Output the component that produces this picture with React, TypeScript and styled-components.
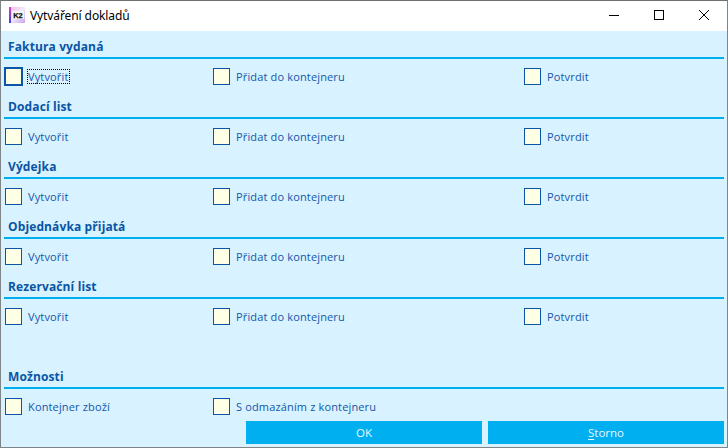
import React from "react";
import styled, { createGlobalStyle } from "styled-components";

const Global = createGlobalStyle`
  html, body { margin: 0; padding: 0; background: #fff; }
`;

const Window = styled.div`
  width: 728px;
  height: 448px;
  box-sizing: border-box;
  border: 1px solid #7f8487;
  border-top-color: #6d7073;
  display: flex;
  flex-direction: column;
  background: #fff;
  overflow: hidden;
`;

const TitleBar = styled.div`
  height: 30px;
  flex: none;
  display: flex;
  align-items: center;
  background: #fff;
`;

const TitleIcon = styled.svg`
  width: 16px;
  height: 16px;
  margin: 0 0 2px 8px;
  flex: none;
`;

const TitleText = styled.span`
  margin-left: 5px;
  padding-bottom: 1px;
  font: 12px "Noto Sans", "Open Sans", sans-serif;
  letter-spacing: -0.1px;
  color: #000;
  flex: 1;
`;

const WinButton = styled.div<{ $gap?: number }>`
  width: 45px;
  height: 30px;
  padding-bottom: 2px;
  box-sizing: border-box;
  display: flex;
  align-items: center;
  justify-content: center;
  margin-right: ${(p) => p.$gap ?? 0}px;
`;

const Body = styled.div`
  flex: 1;
  background: #d8f2ff;
  padding: 0 3px;
  display: flex;
  flex-direction: column;
`;

const Section = styled.section<{ $top?: number }>`
  margin-top: ${(p) => p.$top ?? 0}px;
`;

const Heading = styled.div`
  height: 28px;
  box-sizing: border-box;
  padding: 8px 0 0 4px;
  font: bold 12px/16px "Open Sans", sans-serif;
  letter-spacing: 0.12px;
  color: #0a55a5;
  border-bottom: 2px solid #00aff0;
`;

const Row = styled.div`
  display: grid;
  grid-template-columns: 208px 311px 1fr;
  height: 32px;
  box-sizing: border-box;
  padding-top: 3px;
  align-items: center;
`;

const Field = styled.label`
  display: flex;
  align-items: center;
  padding-left: 1px;
  min-width: 0;
`;

const Box = styled.span<{ $focus?: boolean }>`
  width: ${(p) => (p.$focus ? 19 : 17)}px;
  height: ${(p) => (p.$focus ? 19 : 17)}px;
  margin: 0 ${(p) => (p.$focus ? -1 : 0)}px;
  box-sizing: border-box;
  flex: none;
  background: #ffffe6;
  border: ${(p) => (p.$focus ? 2 : 1)}px solid #0a55a5;
`;

const Label = styled.span<{ $focus?: boolean }>`
  margin-left: 5px;
  padding: 0 1px;
  font: 11px/15px "Open Sans", sans-serif;
  letter-spacing: 0.15px;
  color: #1257ab;
  white-space: nowrap;
  outline: ${(p) => (p.$focus ? "1px dotted #000" : "none")};
  outline-offset: -1px;
`;

const Buttons = styled.div`
  display: flex;
  justify-content: flex-end;
  gap: 6px;
`;

const Btn = styled.div`
  width: 236px;
  height: 23px;
  background: #00aff0;
  color: #e8f8ff;
  font: 11.5px/23px "Open Sans", sans-serif;
  text-align: center;

  u { text-underline-offset: 2px; }
`;

const docs = [
  "Faktura vydaná",
  "Dodací list",
  "Výdejka",
  "Objednávka přijatá",
  "Rezervační list",
];

const Logo = () => (
  <TitleIcon viewBox="0 0 16 16">
    <defs>
      <linearGradient id="lg" x1="0" y1="0" x2="1" y2="1">
        <stop offset="0" stopColor="#f4b6e6" />
        <stop offset="0.5" stopColor="#f3eaf8" />
        <stop offset="1" stopColor="#c7a4ee" />
      </linearGradient>
      <linearGradient id="lv" x1="0" y1="0" x2="0" y2="1">
        <stop offset="0" stopColor="#e040c0" />
        <stop offset="1" stopColor="#3a3cf0" />
      </linearGradient>
    </defs>
    <rect x="0" y="0" width="16" height="16" fill="url(#lg)" />
    <rect x="0" y="0" width="2" height="16" fill="url(#lv)" />
    <rect x="3" y="4" width="12" height="8" fill="#f4f4f4" />
    <text x="9" y="10.8" textAnchor="middle" fontFamily="'Liberation Sans', sans-serif" fontWeight="bold" fontSize="7.5" fill="#111" stroke="#111" strokeWidth="0.25">K2</text>
  </TitleIcon>
);

export default function App() {
  return (
    <>
      <Global />
      <Window>
        <TitleBar>
          <Logo />
          <TitleText>Vytváření dokladů</TitleText>
          <WinButton>
            <svg width="10" height="10" viewBox="0 0 10 10">
              <path d="M0 5.5h10" stroke="#000" strokeWidth="1" />
            </svg>
          </WinButton>
          <WinButton>
            <svg width="10" height="10" viewBox="0 0 10 10">
              <rect x="0.5" y="0.5" width="9" height="9" fill="none" stroke="#000" />
            </svg>
          </WinButton>
          <WinButton $gap={1}>
            <svg width="10" height="10" viewBox="0 0 10 10">
              <path d="M0 0l10 10M10 0L0 10" stroke="#000" strokeWidth="1" />
            </svg>
          </WinButton>
        </TitleBar>
        <Body>
          {docs.map((d, i) => (
            <Section key={d}>
              <Heading>{d}</Heading>
              <Row>
                <Field>
                  <Box $focus={i === 0} />
                  <Label $focus={i === 0}>Vytvořit</Label>
                </Field>
                <Field>
                  <Box />
                  <Label>Přidat do kontejneru</Label>
                </Field>
                <Field>
                  <Box />
                  <Label>Potvrdit</Label>
                </Field>
              </Row>
            </Section>
          ))}
          <Section $top={30}>
            <Heading>Možnosti</Heading>
            <Row>
              <Field>
                <Box />
                <Label>Kontejner zboží</Label>
              </Field>
              <Field>
                <Box />
                <Label>S odmazáním z kontejneru</Label>
              </Field>
            </Row>
          </Section>
          <Buttons>
            <Btn>OK</Btn>
            <Btn>
              <u>S</u>torno
            </Btn>
          </Buttons>
        </Body>
      </Window>
    </>
  );
}
